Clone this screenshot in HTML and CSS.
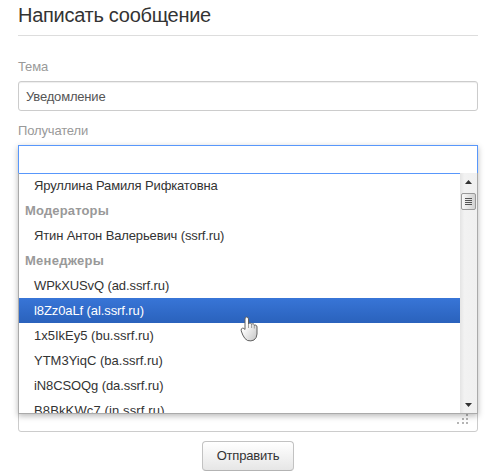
FILE: index.html
```
<!DOCTYPE html>
<html lang="ru">
<head>
<meta charset="utf-8">
<title>Написать сообщение</title>
<link rel="stylesheet" href="styles.css">
</head>
<body>
<form class="form">
  <h1 class="title">Написать сообщение</h1>
  <div class="label label-subject">Тема</div>
  <div class="input">Уведомление</div>
  <div class="label label-recipients">Получатели</div>
  <div class="message">
    <svg class="grip" width="12" height="11" viewBox="0 0 12 11"><path d="M9 0h2v2H9zM5 4h2v2H5zM9 4h2v2H9zM0 8h2v2H0zM5 8h2v2H5zM9 8h2v2H9z" fill="#b5b5b5"/></svg>
    <div class="chooser">
      <div class="search"></div>
      <div class="drop">
        <ul class="list">
          <li class="item name">Яруллина Рамиля Рифкатовна</li>
          <li class="group">Модераторы</li>
          <li class="item name">Ятин Антон Валерьевич (ssrf.ru)</li>
          <li class="group group-wide">Менеджеры</li>
          <li class="item">WPkXUSvQ (ad.ssrf.ru)</li>
          <li class="item active">l8Zz0aLf (al.ssrf.ru)</li>
          <li class="item loose">1x5IkEy5 (bu.ssrf.ru)</li>
          <li class="item loose">YTM3YiqC (ba.ssrf.ru)</li>
          <li class="item">iN8CSOQg (da.ssrf.ru)</li>
          <li class="item wide">B8BkKWc7 (in.ssrf.ru)</li>
        </ul>
        <div class="scroll">
          <svg class="arrow" width="7" height="4" viewBox="0 0 7 4"><path d="M0 4 3.5 0 7 4z" fill="#333"/></svg>
          <div class="thumb"><i></i><i></i><i></i><i></i></div>
          <svg class="arrow arrow-down" width="7" height="4" viewBox="0 0 7 4"><path d="M0 0h7L3.5 4z" fill="#333"/></svg>
        </div>
      </div>
    </div>
  </div>
  <div class="actions"><button class="button" type="button">Отправить</button></div>
</form>
<svg class="cursor" width="18" height="26" viewBox="0 0 18 26">
  <defs><linearGradient id="hand" x1="0" y1="0" x2="1" y2="1"><stop offset=".3" stop-color="#fff"/><stop offset="1" stop-color="#c4c4c4"/></linearGradient></defs>
  <path d="M5 13.500V3Q5 1 6.700 1T8.500 3V8Q9 6.800 10.200 7 11.500 7.200 11.600 8.500 12.300 7.500 13.400 7.800 14.300 8.200 14.300 9.500 15 8.700 16 9.200 17 9.700 17 11V18Q16.800 22 14 24 11 25.500 7.500 24.500 4.500 23 2.800 19L1.200 14.800Q.8 12.300 2.500 12.200 4 12 5 13.500Z" fill="url(#hand)" stroke="#606060"/>
  <path d="M8.500 8v4M11.600 8.500v3.500M14.300 9.500v3" stroke="#888" stroke-width=".8" fill="none"/>
</svg>
</body>
</html>
```

FILE: styles.css
```
* { box-sizing: border-box; }
body {
  margin: 0;
  width: 487px;
  height: 474px;
  overflow: hidden;
  background: #fff;
  color: #333;
  font: 13px/20px "Liberation Sans", Arial, sans-serif;
}
.form { width: 460px; margin-left: 18px; }
.title {
  height: 36px;
  margin: 0;
  padding-top: 5px;
  border-bottom: 1px solid #ddd;
  font-size: 20px;
  font-weight: normal;
  line-height: 20px;
  letter-spacing: -.28px;
}
.label { height: 20px; color: #999; letter-spacing: -.15px; }
.label-subject { margin: 21px 0 4px; }
.input {
  height: 30px;
  padding: 5px 7px;
  border: 1px solid #ccc;
  border-radius: 3px;
  box-shadow: inset 0 1px 1px rgba(0, 0, 0, .07);
  color: #555;
  letter-spacing: -.18px;
}
.label-recipients { margin: 10px 0 4px; }
.message {
  position: relative;
  height: 287px;
  border-radius: 3px;
  border: 1px solid #ccc;
}
.grip { position: absolute; right: 8px; bottom: 6px; }
.chooser {
  position: relative;
  width: 460px;
  height: 269px;
  margin: -1px;
  background: #fff;
  box-shadow: 0 2px 6px rgba(0, 0, 0, .28);
}
.search { height: 28px; border: 1px solid #5897fb; border-bottom: 0; }
.drop {
  display: flex;
  height: 241px;
  border: 1px solid #aaa;
  border-top: 0;
}
.list {
  flex: 1;
  height: 240px;
  margin: 0;
  padding: 0;
  overflow: hidden;
  list-style: none;
  white-space: nowrap;
  border-top: 1px solid #5897fb;
}
.item, .group { height: 25px; padding: 3px 15px; letter-spacing: -.1px; }
.item:first-child { height: 24px; padding-top: 2px; }
.name { letter-spacing: -.13px; }
.loose { letter-spacing: 0; }
.wide { letter-spacing: .13px; }
.group { padding-left: 6px; color: #999; font-weight: bold; letter-spacing: .15px; }
.group-wide { letter-spacing: .27px; }
.active { color: #fff; background: linear-gradient(#3875d7, #2a62bc); }
.scroll {
  display: flex;
  flex-direction: column;
  align-items: center;
  width: 17px;
  background: linear-gradient(90deg, #e4e4e4, #f2f2f2 25%, #f0f0f0);
}
.arrow { display: block; margin-top: 7px; }
.arrow-down { margin: auto 0 6px; }
.thumb {
  display: flex;
  flex-direction: column;
  align-items: center;
  gap: 1px;
  width: 15px;
  height: 17px;
  margin-top: 9px;
  padding-top: 4px;
  border: 1px solid #999;
  border-radius: 2px;
  background: linear-gradient(90deg, #f8f8f8, #d2d2d2);
}
.thumb i { width: 7px; height: 1px; background: #555; }
.actions { display: flex; justify-content: center; padding: 9px 0 0; }
.button {
  width: 92px;
  height: 30px;
  padding: 0;
  border: 1px solid #c2c2c2;
  border-bottom-color: #b3b3b3;
  border-radius: 4px;
  background: linear-gradient(#fff, #e6e6e6);
  color: #333;
  font: 13px/20px "Liberation Sans", Arial, sans-serif;
  letter-spacing: -.2px;
}
.cursor { position: absolute; left: 240px; top: 316px; }
```
